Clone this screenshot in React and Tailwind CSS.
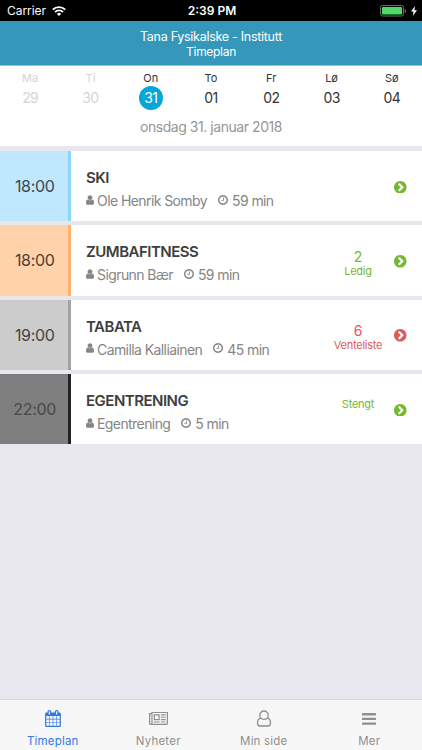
import clsx from 'clsx';

const glyphs = {
  user: {
    box: '256 128 1280 1536',
    d: 'M1536 1399q0 109-62.5 187t-150.5 78h-854q-88 0-150.5-78t-62.5-187q0-85 8.5-160.5t31.5-152 58.5-131 94-89 134.5-34.5q131 128 313 128t313-128q76 0 134.5 34.5t94 89 58.5 131 31.5 152 8.5 160.5zm-256-887q0 159-112.5 271.5t-271.5 112.5-271.5-112.5-112.5-271.5 112.5-271.5 271.5-112.5 271.5 112.5 112.5 271.5z'
  },
  clock: {
    box: '128 128 1536 1536',
    d: 'M1024 544v448q0 14-9 23t-23 9h-320q-14 0-23-9t-9-23v-64q0-14 9-23t23-9h224v-352q0-14 9-23t23-9h64q14 0 23 9t9 23zm416 352q0-148-73-273t-198-198-273-73-273 73-198 198-73 273 73 273 198 198 273 73 273-73 198-198 73-273zm224 0q0 209-103 385.5t-279.5 279.5-385.5 103-385.5-103-279.5-279.5-103-385.5 103-385.5 279.5-279.5 385.5-103 385.5 103 279.5 279.5 103 385.5z'
  },
  chevron: {
    box: '128 128 1536 1536',
    d: 'M845 1395l454-454q19-19 19-45t-19-45l-454-454q-19-19-45-19t-45 19l-102 102q-19 19-19 45t19 45l307 307-307 307q-19 19-19 45t19 45l102 102q19 19 45 19t45-19zm819-499q0 209-103 385.5t-279.5 279.5-385.5 103-385.5-103-279.5-279.5-103-385.5 103-385.5 279.5-279.5 385.5-103 385.5 103 279.5 279.5 103 385.5z'
  },
  calendar: {
    box: '64 0 1664 1792',
    d: 'M192 1664h288v-288h-288v288zm352 0h320v-288h-320v288zm-352-352h288v-320h-288v320zm352 0h320v-320h-320v320zm-352-384h288v-288h-288v288zm736 736h320v-288h-320v288zm-384-736h320v-288h-320v288zm768 736h288v-288h-288v288zm-384-352h320v-320h-320v320zm-352-864v-288q0-13-9.5-22.5t-22.5-9.5h-64q-13 0-22.5 9.5t-9.5 22.5v288q0 13 9.5 22.5t22.5 9.5h64q13 0 22.5-9.5t9.5-22.5zm736 864h288v-320h-288v320zm-384-384h320v-288h-320v288zm384 0h288v-288h-288v288zm32-480v-288q0-13-9.5-22.5t-22.5-9.5h-64q-13 0-22.5 9.5t-9.5 22.5v288q0 13 9.5 22.5t22.5 9.5h64q13 0 22.5-9.5t9.5-22.5zm384-64v1280q0 52-38 90t-90 38h-1408q-52 0-90-38t-38-90v-1280q0-52 38-90t90-38h128v-96q0-66 47-113t113-47h64q66 0 113 47t47 113v96h384v-96q0-66 47-113t113-47h64q66 0 113 47t47 113v96h128q52 0 90 38t38 90z'
  },
  news: {
    box: '0 0 2048 1792',
    d: 'M1024 512h-384v384h384v-384zm128 640v128h-640v-128h640zm0-768v640h-640v-640h640zm640 768v128h-512v-128h512zm0-256v128h-512v-128h512zm0-256v128h-512v-128h512zm0-256v128h-512v-128h512zm-1536 960v-960h-128v960q0 26 19 45t45 19 45-19 19-45zm1664 0v-1088h-1536v1088q0 33-11 64h1483q26 0 45-19t19-45zm128-1216v1216q0 80-56 136t-136 56h-1664q-80 0-136-56t-56-136v-1088h256v-128h1792z'
  }
};

function Glyph({ name, className }) {
  return (
    <svg viewBox={glyphs[name].box} fill="currentColor" className={clsx('shrink-0', className)}>
      <path d={glyphs[name].d} />
    </svg>
  );
}

const days = [
  { name: 'Ma', date: '29', past: true },
  { name: 'Ti', date: '30', past: true },
  { name: 'On', date: '31', selected: true },
  { name: 'To', date: '01' },
  { name: 'Fr', date: '02' },
  { name: 'Lø', date: '03' },
  { name: 'Sø', date: '04' }
];

const classes = [
  {
    time: '18:00',
    title: 'SKI',
    trainer: 'Ole Henrik Somby',
    duration: '59 min',
    block: 'bg-[#bfe8ff] border-[#8fd5fb] text-[#3d474c]',
    arrow: 'text-[#76b82f]'
  },
  {
    time: '18:00',
    title: 'ZUMBAFITNESS',
    trainer: 'Sigrunn Bær',
    duration: '59 min',
    block: 'bg-[#ffd2a9] border-[#fdb36f] text-[#4c4138]',
    count: '2',
    status: 'Ledig',
    arrow: 'text-[#76b82f]'
  },
  {
    time: '19:00',
    title: 'TABATA',
    trainer: 'Camilla Kalliainen',
    duration: '45 min',
    block: 'bg-[#cccccc] border-[#a3a3a3] text-[#444444]',
    count: '6',
    status: 'Venteliste',
    arrow: 'text-[#e05a5a]'
  },
  {
    time: '22:00',
    title: 'EGENTRENING',
    trainer: 'Egentrening',
    duration: '5 min',
    block: 'bg-[#7f7f7f] border-[#222222] text-[#484848]',
    status: 'Stengt',
    arrow: 'text-[#76b82f]'
  }
];

function StatusBar() {
  return (
    <div className="grid h-[21px] grid-cols-3 items-center bg-black text-xs leading-[21px] text-white">
      <div className="flex items-center gap-[6px] pl-[7px]">
        <span className="tracking-[-0.05px]">Carrier</span>
        <svg viewBox="0 0 14 10" className="h-[10px] w-[14px]" fill="none" stroke="currentColor" strokeWidth="1.9">
          <path d="M.8 3.7a8.8 8.8 0 0 1 12.4 0" />
          <path d="M3 6a5.7 5.7 0 0 1 8 0" />
          <path d="M7 10 4.9 7.9a3 3 0 0 1 4.2 0z" fill="currentColor" stroke="none" />
        </svg>
      </div>
      <span className="pl-[2px] text-center font-semibold">2:39 PM</span>
      <div className="flex items-center justify-end gap-[4px] pr-[5px]">
        <svg viewBox="0 0 27 12" className="h-[12px] w-[27px]">
          <rect x=".5" y=".5" width="23" height="10.5" rx="2" fill="none" stroke="#66706a" />
          <rect x="2" y="2" width="20" height="7.5" rx=".8" fill="#4cd964" />
          <path d="M24.7 4v4q1.4-.7 1.4-2t-1.4-2" fill="#66706a" />
        </svg>
        <svg viewBox="0 0 6 10" className="h-[10px] w-[6px]" fill="currentColor">
          <path d="M4 0 0 5.6h2.5L1.8 10 6 4.2H3.4z" />
        </svg>
      </div>
    </div>
  );
}

function Week() {
  return (
    <div className="h-[80px] bg-white pt-[5px]">
      <div className="flex">
        {days.map((day) => (
          <div
            key={day.date}
            className={clsx('flex flex-1 flex-col items-center', day.past ? 'text-[#d5d5d5]' : 'text-[#333333]')}
          >
            <span className="text-[11px] leading-[15px]">{day.name}</span>
            <span
              className={clsx(
                'size-6 rounded-full text-center text-sm leading-6 tracking-[-0.6px]',
                day.selected && 'bg-[#05a6d8] text-white'
              )}
            >
              {day.date}
            </span>
          </div>
        ))}
      </div>
      <p className="pt-[7px] text-center text-sm leading-5 tracking-[-0.45px] text-[#969696]">
        onsdag 31. januar 2018
      </p>
    </div>
  );
}

function ClassRow({ item }) {
  return (
    <div className="flex h-[70.3px] items-center bg-white">
      <div
        className={clsx(
          'flex h-full w-[70.5px] items-center justify-center border-r-[3px] pl-[2px] text-base tracking-[-0.3px]',
          item.block
        )}
      >
        {item.time}
      </div>
      <div className="min-w-0 flex-1 pt-[7px] pl-[15.5px]">
        <h2 className="text-[15px] leading-[22px] font-semibold tracking-[-0.5px] text-[#3e3e3e]">{item.title}</h2>
        <div className="flex items-center text-sm leading-[23px] tracking-[-0.58px] text-[#858585]">
          <Glyph name="user" className="mr-[3px] mb-[2px] h-[10px] w-[8px]" />
          <span>{item.trainer}</span>
          <Glyph name="clock" className="mr-[4px] mb-[2px] ml-[11px] size-[10px]" />
          <span className="tracking-[-0.6px]">{item.duration}</span>
        </div>
      </div>
      <div className={clsx('flex items-center', item.arrow)}>
        <div
          className={clsx(
            'w-[72px] text-center text-[11px] leading-[14px] tracking-[-0.25px]',
            !item.count && 'pb-[11px]'
          )}
        >
          {item.count && <div className="pt-[6px] text-sm leading-[15px]">{item.count}</div>}
          {item.status}
        </div>
        <Glyph name="chevron" className="mt-[2px] mr-[15.5px] size-[12.5px]" />
      </div>
    </div>
  );
}

function TabBar() {
  const label = 'text-[11.5px] leading-[14px] tracking-[0.2px]';
  return (
    <nav className="grid h-[51px] grid-cols-4 border-t border-[#d5d4dc] bg-[#f7f7f7] pt-[10px] text-[#8f8f8f]">
      <div className="flex flex-col items-center gap-[6px] text-[#3478e5]">
        <Glyph name="calendar" className="h-[17px] w-[16px] mb-px" />
        <span className={label}>Timeplan</span>
      </div>
      <div className="flex flex-col items-center gap-[6px]">
        <Glyph name="news" className="h-[18px] w-[19px]" />
        <span className={label}>Nyheter</span>
      </div>
      <div className="flex flex-col items-center gap-[6px]">
        <svg viewBox="0 0 16 18" className="h-[18px] w-[16px]" fill="none" stroke="currentColor" strokeWidth="1.3">
          <circle cx="8" cy="5.2" r="4.2" />
          <path d="M4.9 8.1C2.5 8.1 1.5 10.3 1.5 13c0 2 1 3 2.5 3h8c1.5 0 2.5-1 2.5-3 0-2.7-1-4.900-3.400-4.900" />
        </svg>
        <span className={label}>Min side</span>
      </div>
      <div className="flex flex-col items-center gap-[6px]">
        <svg viewBox="0 0 14 18" className="h-[18px] w-[14px]" fill="currentColor">
          <rect y="3" width="14" height="2.4" rx=".5" />
          <rect y="7.7" width="14" height="2.4" rx=".5" />
          <rect y="12.4" width="14" height="2.4" rx=".5" />
        </svg>
        <span className={label}>Mer</span>
      </div>
    </nav>
  );
}

export default function App() {
  return (
    <div className="flex h-[750px] w-[422px] flex-col overflow-hidden bg-[#e8e7ee] font-['Inter','Liberation_Sans',sans-serif]">
      <StatusBar />
      <header className="h-[45px] border-b border-[#8cc8de] bg-[#3598ba] pt-[8px] text-center text-white">
        <h1 className="text-[12.5px] leading-[15px] tracking-[-0.28px]">Tana Fysikalske - Institutt</h1>
        <p className="text-xs leading-[15px] tracking-[-0.3px]">Timeplan</p>
      </header>
      <Week />
      <main className="flex flex-1 flex-col gap-1 pt-[5px]">
        {classes.map((item) => (
          <ClassRow key={item.title} item={item} />
        ))}
      </main>
      <TabBar />
    </div>
  );
}
